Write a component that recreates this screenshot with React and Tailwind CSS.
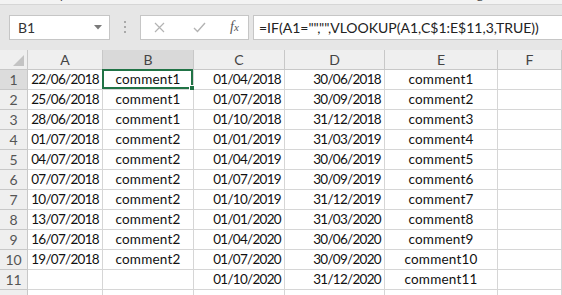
import React from 'react';

const rows = [
  ['22/06/2018', 'comment1', '01/04/2018', '30/06/2018', 'comment1'],
  ['25/06/2018', 'comment1', '01/07/2018', '30/09/2018', 'comment2'],
  ['28/06/2018', 'comment1', '01/10/2018', '31/12/2018', 'comment3'],
  ['01/07/2018', 'comment2', '01/01/2019', '31/03/2019', 'comment4'],
  ['04/07/2018', 'comment2', '01/04/2019', '30/06/2019', 'comment5'],
  ['07/07/2018', 'comment2', '01/07/2019', '30/09/2019', 'comment6'],
  ['10/07/2018', 'comment2', '01/10/2019', '31/12/2019', 'comment7'],
  ['13/07/2018', 'comment2', '01/01/2020', '31/03/2020', 'comment8'],
  ['16/07/2018', 'comment2', '01/04/2020', '30/06/2020', 'comment9'],
  ['19/07/2018', 'comment2', '01/07/2020', '30/09/2020', 'comment10'],
  ['', '', '01/10/2020', '31/12/2020', 'comment11'],
  ['', '', '', '', ''],
];

const columns = ['A', 'B', 'C', 'D', 'E', 'F'];
// dates right aligned and condensed, comments centered
const cellStyles = [
  'justify-end tracking-[-0.7px]',
  'justify-center tracking-[0.2px]',
  'justify-end tracking-[-0.7px]',
  'justify-end tracking-[-0.7px]',
  'justify-center tracking-[0.2px]',
  'justify-start',
];

const FormulaBar = () => (
  <div className="bg-[#e6e6e6]">
    {/* cut-off ribbon above */}
    <div className="h-[5px] overflow-hidden bg-[#f3f3f3] border-b border-[#d6d6d6]">
      <div className="-mt-[12px] flex text-[12px] leading-[14px] text-[#444]">
        <span className="ml-[60px]">p</span>
        <span className="ml-[410px]">g</span>
      </div>
    </div>
    <div className="flex items-center h-[45px] pb-[1px]">
      {/* name box */}
      <div className="ml-[9px] w-[101px] h-[25px] bg-white border border-[#c6c6c6] flex items-center justify-between pl-[8px] pr-[7px]">
        <span className="text-[14px] text-[#333]">B1</span>
        <svg width="8" height="5" viewBox="0 0 8 5">
          <path d="M0 0 L8 0 L4 4.5 Z" fill="#7a7a7a" />
        </svg>
      </div>
      {/* separator dots */}
      <div className="w-[30px] flex flex-col items-center gap-[3px]">
        <span className="w-[2px] h-[2px] bg-[#a9a9a9]" />
        <span className="w-[2px] h-[2px] bg-[#a9a9a9]" />
        <span className="w-[2px] h-[2px] bg-[#a9a9a9]" />
      </div>
      {/* cancel / enter / fx */}
      <div className="w-[109px] h-[25px] bg-white border border-[#c6c6c6] flex items-center">
        <svg className="ml-[13px]" width="11" height="11" viewBox="0 0 11 11">
          <path d="M1 1 L10 10 M10 1 L1 10" stroke="#b3b3b3" strokeWidth="1.2" />
        </svg>
        <svg className="ml-[28px]" width="13" height="11" viewBox="0 0 13 11">
          <path d="M1 6 L4.5 9.5 L12 1" stroke="#b3b3b3" strokeWidth="1.4" fill="none" />
        </svg>
        <span className="ml-[24px] italic text-[14px] text-[#555] leading-none" style={{ fontFamily: '"Liberation Serif", serif' }}>
          f<span className="text-[11px]">x</span>
        </span>
      </div>
      {/* formula input */}
      <div className="ml-[4px] flex-1 h-[25px] bg-white border border-[#c6c6c6] border-r-0 flex items-center pl-[5px]">
        <span className="text-[14px] text-[#222] whitespace-nowrap">=IF(A1="","",VLOOKUP(A1,C$1:E$11,3,TRUE))</span>
      </div>
    </div>
  </div>
);

const Sheet = () => (
  <div className="grid grid-cols-[28px_75px_91px_91px_100px_113px_1fr] text-[13.5px]">
    {/* header row */}
    <div className="h-[20px] bg-[#efefef] border-r border-b border-[#c8c8c8] flex items-end justify-end pr-[3px] pb-[3px]">
      <svg width="11" height="11" viewBox="0 0 11 11">
        <path d="M11 0 L11 11 L0 11 Z" fill="#c3c3c3" />
      </svg>
    </div>
    {columns.map((c) => (
      <div
        key={c}
        className={`h-[20px] border-r border-b border-[#c8c8c8] flex items-center justify-center text-[14px] text-[#444] ${
          c === 'B' ? 'bg-[#d9d9d9]' : 'bg-[#efefef]'
        }`}
      >
        {c}
      </div>
    ))}

    {rows.map((r, i) => (
      <React.Fragment key={i}>
        <div
          className={`h-[20px] border-r border-b border-[#c8c8c8] flex items-center justify-center text-[14px] text-[#555] ${
            i === 0 ? 'bg-[#dcdcdc]' : 'bg-[#efefef]'
          }`}
        >
          {i < 11 ? i + 1 : ''}
        </div>
        {[...r, ''].map((v, j) => (
          <div
            key={j}
            className={`relative h-[20px] bg-white border-r border-b border-[#d6d6d6] flex items-center px-[3px] text-[#111] whitespace-nowrap ${cellStyles[j]}`}
          >
            {v}
            {i === 0 && j === 1 && (
              <div className="absolute -left-[1px] -top-[1px] right-0 bottom-0 border-2 border-[#217346]">
                <div className="absolute -right-[4px] -bottom-[4px] w-[6px] h-[6px] bg-[#217346] border border-white" />
              </div>
            )}
          </div>
        ))}
      </React.Fragment>
    ))}
  </div>
);

export default function App() {
  return (
    <div className="w-[562px] h-[295px] overflow-hidden bg-white" style={{ fontFamily: 'Lato, "Open Sans", sans-serif' }}>
      <FormulaBar />
      <Sheet />
    </div>
  );
}
